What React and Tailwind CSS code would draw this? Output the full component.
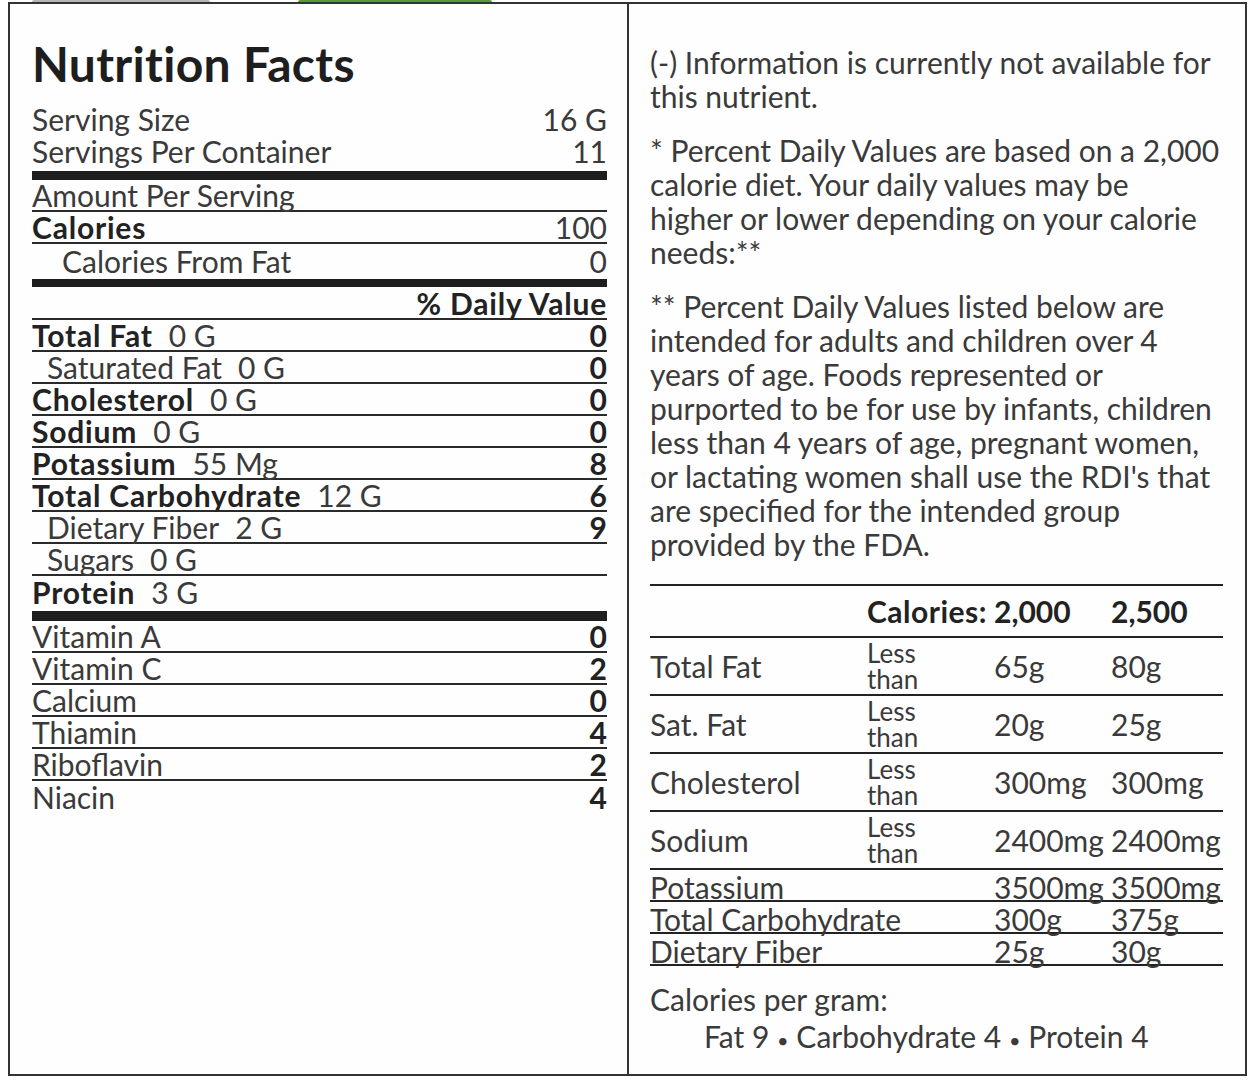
const FONT = { fontFamily: "Lato, 'Open Sans', sans-serif" };

function Row({ label, value, bold, indent, amount, last, dv }) {
  return (
    <div className={`flex h-[32px] items-center justify-between ${last ? "" : "border-b-2 border-[#2a2a2a]"}`}>
      <span className={`${indent ? "pl-[15px]" : ""} whitespace-nowrap`}>
        <span className={bold ? "font-bold tracking-[0.8px] text-[#222]" : ""}>{label}</span>
        {amount && <span className="ml-[16px] font-normal">{amount}</span>}
      </span>
      <span className={dv ? "font-bold text-[#222]" : ""}>{value}</span>
    </div>
  );
}

function LeftPanel() {
  const nutrients = [
    { label: "Total Fat", amount: "0 G", value: "0", bold: true },
    { label: "Saturated Fat", amount: "0 G", value: "0", indent: true },
    { label: "Cholesterol", amount: "0 G", value: "0", bold: true },
    { label: "Sodium", amount: "0 G", value: "0", bold: true },
    { label: "Potassium", amount: "55 Mg", value: "8", bold: true },
    { label: "Total Carbohydrate", amount: "12 G", value: "6", bold: true },
    { label: "Dietary Fiber", amount: "2 G", value: "9", indent: true },
    { label: "Sugars", amount: "0 G", value: "", indent: true },
  ];
  const vitamins = [
    ["Vitamin A", "0"],
    ["Vitamin C", "2"],
    ["Calcium", "0"],
    ["Thiamin", "4"],
    ["Riboflavin", "2"],
    ["Niacin", "4"],
  ];

  return (
    <div className="border-r-2 border-[#333] pl-[22px] pr-[20px] pt-[34px] text-[30px] leading-[32px] text-[#3a3a3a]">
      <h1 className="h-[65px] text-[48px] font-bold leading-[52px] tracking-[0.3px] text-[#1e1e1e] [font-variant-ligatures:none]">
        Nutrition Facts
      </h1>
      <div className="flex h-[32px] items-center justify-between">
        <span>Serving Size</span>
        <span>16 G</span>
      </div>
      <div className="flex h-[32px] items-center justify-between">
        <span>Servings Per Container</span>
        <span>11</span>
      </div>
      <div className="mt-[4px] h-[9px] bg-[#1e1e1e]" />
      <Row label="Amount Per Serving" value="" />
      <Row label="Calories" value="100" bold />
      <div className="flex h-[35px] items-center justify-between pb-[2px]">
        <span className="pl-[30px]">Calories From Fat</span>
        <span>0</span>
      </div>
      <div className="h-[8px] bg-[#1e1e1e]" />
      <div className="flex h-[33px] items-center justify-end border-b-2 border-[#2a2a2a] font-bold tracking-[0.8px] text-[#222]">
        % Daily Value
      </div>
      {nutrients.map((n) => (
        <Row key={n.label} {...n} dv />
      ))}
      <Row label="Protein" amount="3 G" value="" bold last />
      <div className="mt-[3px] h-[10px] bg-[#1e1e1e]" />
      {vitamins.map(([label, value], i) => (
        <Row key={label} label={label} value={value} dv last={i === vitamins.length - 1} />
      ))}
    </div>
  );
}

function LimitRow({ label, less, a, b, tall }) {
  return (
    <div
      className={`grid grid-cols-[217px_127px_117px_1fr] items-center border-b-2 border-[#222] ${
        tall ? "h-[58px]" : "h-[32px]"
      }`}
    >
      <span className="whitespace-nowrap">{label}</span>
      <span className="text-[26px] leading-[26px]">
        {less && (
          <>
            Less
            <br />
            than
          </>
        )}
      </span>
      <span className="whitespace-nowrap">{a}</span>
      <span className="whitespace-nowrap">{b}</span>
    </div>
  );
}

function RightPanel() {
  return (
    <div className="pl-[21px] pr-[22px] pt-[41px] text-[30px] leading-[34px] text-[#3a3a3a]">
      <p>(-) Information is currently not available for this nutrient.</p>
      <p className="mt-[20px]">
        * Percent Daily Values are based on a 2,000 calorie diet. Your daily values may be
        <br />
        higher or lower depending on your calorie needs:**
      </p>
      <p className="mt-[20px]">
        ** Percent Daily Values listed below are intended for adults and children over 4 years of age. Foods
        represented or purported to be for use by infants, children less than 4 years of age, pregnant women,
        or lactating women shall use the RDI's that are specified for the intended group provided by the FDA.
      </p>

      <div className="mt-[23px] border-t-2 border-[#222]">
        <div className="grid h-[52px] grid-cols-[217px_127px_117px_1fr] items-center border-b-2 border-[#222] font-bold text-[#222]">
          <span />
          <span className="whitespace-nowrap tracking-[0.5px]">Calories:</span>
          <span>2,000</span>
          <span>2,500</span>
        </div>
        <LimitRow label="Total Fat" less a="65g" b="80g" tall />
        <LimitRow label="Sat. Fat" less a="20g" b="25g" tall />
        <LimitRow label="Cholesterol" less a="300mg" b="300mg" tall />
        <LimitRow label="Sodium" less a="2400mg" b="2400mg" tall />
        <LimitRow label="Potassium" a="3500mg" b="3500mg" />
        <LimitRow label="Total Carbohydrate" a="300g" b="375g" />
        <LimitRow label="Dietary Fiber" a="25g" b="30g" />
      </div>

      <p className="mt-[16px]">Calories per gram:</p>
      <p className="pl-[54px] pt-[3px]">
        Fat 9 <span className="text-[20px]">•</span> Carbohydrate 4 <span className="text-[20px]">•</span> Protein 4
      </p>
    </div>
  );
}

export default function App() {
  return (
    <div className="h-[1088px] w-[1260px] bg-white" style={FONT}>
      <div className="flex h-[2px] items-end">
        <div className="ml-[32px] h-[2px] w-[178px] rounded-t bg-[#b5b5b5]" />
        <div className="ml-[88px] h-[2px] w-[194px] rounded-t bg-[#5b9a3a]" />
      </div>
      <div className="ml-[8px] grid h-[1074px] w-[1239px] grid-cols-[619px_1fr] border-2 border-[#333] bg-[#fefefe]">
        <LeftPanel />
        <RightPanel />
      </div>
    </div>
  );
}
